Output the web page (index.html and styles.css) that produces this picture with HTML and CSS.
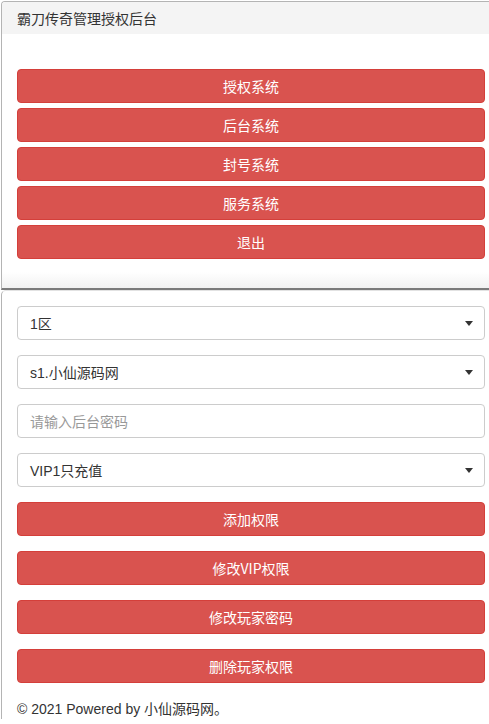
FILE: index.html
```html
<!DOCTYPE html>
<html lang="zh-CN">
<head>
<meta charset="utf-8">
<title>霸刀传奇管理授权后台</title>
<link rel="stylesheet" href="styles.css">
</head>
<body>
<div class="page">
  <section class="panel panel-top">
    <div class="panel-heading">霸刀传奇管理授权后台</div>
    <div class="panel-body nav-body">
      <button class="btn">授权系统</button>
      <button class="btn">后台系统</button>
      <button class="btn">封号系统</button>
      <button class="btn">服务系统</button>
      <button class="btn">退出</button>
    </div>
  </section>
  <section class="panel panel-form">
    <div class="panel-body form-body">
      <div class="select">
        <span>1区</span>
        <span class="caret"></span>
      </div>
      <div class="select">
        <span>s1.小仙源码网</span>
        <span class="caret"></span>
      </div>
      <div class="input">
        <span class="placeholder">请输入后台密码</span>
      </div>
      <div class="select">
        <span>VIP1只充值</span>
        <span class="caret"></span>
      </div>
      <button class="btn">添加权限</button>
      <button class="btn">修改VIP权限</button>
      <button class="btn">修改玩家密码</button>
      <button class="btn">删除玩家权限</button>
      <p class="footer">© 2021 Powered by 小仙源码网。</p>
    </div>
  </section>
</div>
</body>
</html>
```

FILE: styles.css
```css
html, body {
  margin: 0;
  padding: 0;
  background: #ffffff;
}
body {
  font-family: "Liberation Sans", "Noto Sans CJK SC", sans-serif;
  font-size: 14px;
  color: #333333;
}
.page {
  padding-top: 1px;
  padding-left: 1px;
}
.panel {
  box-sizing: border-box;
  background: #ffffff;
}
.panel-top {
  border-top: 1px solid #b4b4b4;
  border-left: 1px solid #b4b4b4;
  border-bottom: 2px solid #7b7b7b;
  border-top-left-radius: 4px;
  background: linear-gradient(to bottom, #ffffff 0, #ffffff 270px, #f0f0f0 288px);
}
.panel-heading {
  height: 32px;
  line-height: 33px;
  padding: 0 15px;
  background: #f4f4f4;
  color: #333333;
  font-family: "Noto Sans CJK SC", sans-serif;
  font-size: 14px;
  border-top-left-radius: 3px;
}
.panel-body {
  padding: 0 4px 0 15px;
  display: flex;
  flex-direction: column;
}
.nav-body {
  padding-top: 35px;
  padding-bottom: 29px;
  gap: 5px;
}
.panel-form {
  border-left: 1px solid #b4b4b4;
  border-top: 1px solid #e2e2e2;
  border-top-left-radius: 5px;
}
.form-body {
  padding-top: 15px;
  gap: 15px;
}
.btn {
  display: block;
  width: 100%;
  height: 34px;
  margin: 0;
  padding: 0;
  border: 1px solid #d43f3a;
  border-radius: 4px;
  background: #d9534f;
  color: #ffffff;
  font-family: "Noto Sans CJK SC", sans-serif;
  font-size: 14px;
  line-height: 31px;
  text-align: center;
}
.select, .input {
  height: 34px;
  box-sizing: border-box;
  border: 1px solid #cccccc;
  border-radius: 4px;
  padding: 0 12px;
  display: flex;
  align-items: center;
  justify-content: space-between;
  color: #333333;
  font-family: "Liberation Sans", "Noto Sans CJK SC", sans-serif;
  font-size: 14px;
}
.caret {
  width: 0;
  height: 0;
  border-left: 4px solid transparent;
  border-right: 4px solid transparent;
  border-top: 5px solid #333333;
  margin-right: -1px;
}
.placeholder {
  color: #999999;
}
.footer {
  margin: 1px 0 0;
  line-height: 20px;
  color: #333333;
  font-size: 14px;
}
```
